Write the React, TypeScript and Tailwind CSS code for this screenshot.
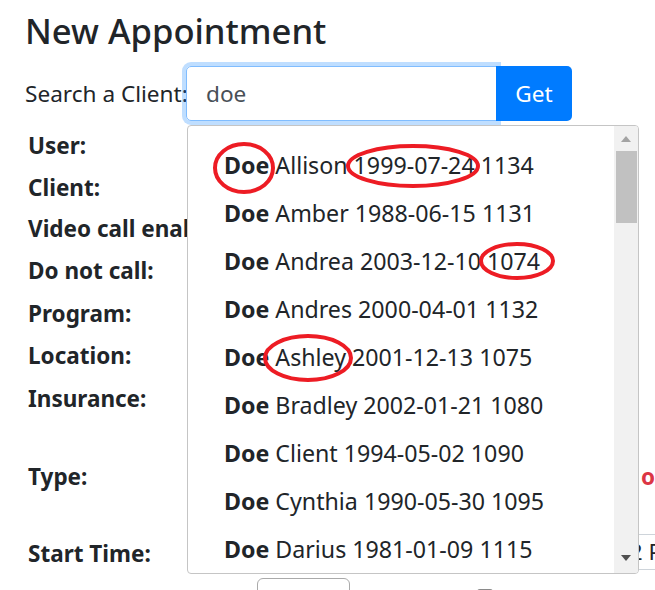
import React from "react";

const items: [string, string, string][] = [
  ["Allison", "1999-07-24", "1134"],
  ["Amber", "1988-06-15", "1131"],
  ["Andrea", "2003-12-10", "1074"],
  ["Andres", "2000-04-01", "1132"],
  ["Ashley", "2001-12-13", "1075"],
  ["Bradley", "2002-01-21", "1080"],
  ["Client", "1994-05-02", "1090"],
  ["Cynthia", "1990-05-30", "1095"],
  ["Darius", "1981-01-09", "1115"],
  ["Elena", "1985-03-11", "1120"],
];

function Row({ h, label, children }: { h: string; label: string; children?: React.ReactNode }) {
  return (
    <div className={`flex items-start ${h}`}>
      <span className="w-[160px] shrink-0 whitespace-nowrap text-[22.5px] font-bold leading-[30px]">{label}</span>
      {children}
    </div>
  );
}

export default function App() {
  return (
    <div className="relative h-[590px] w-[655px] overflow-hidden bg-white font-['Noto_Sans',sans-serif] text-[#212529]">
      <div className="pl-[25px]">
        <h2 className="h-[62px] text-[34.6px] font-medium leading-[62px]">New Appointment</h2>
        <div className="mt-[4px] flex h-[55px] items-center">
          <span className="w-[161px] shrink-0 whitespace-nowrap text-[22.6px]">Search a Client:</span>
          <div className="flex h-full">
            <div className="flex w-[311px] items-center rounded-l-[5px] border border-[#80bdff] pl-[19px] text-[22.6px] text-[#495057] shadow-[0_0_0_4px_rgba(0,123,255,0.25)]">
              doe
            </div>
            <button className="relative z-10 -ml-px w-[76px] rounded-r-[5px] bg-[#007bff] text-[22.6px] text-white">Get</button>
          </div>
        </div>
      </div>

      <div className="mt-[10px] pl-[28px]">
        <Row h="h-[42px]" label="User:" />
        <Row h="h-[41px]" label="Client:" />
        <Row h="h-[42px]" label="Video call enabled:" />
        <Row h="h-[43px]" label="Do not call:" />
        <Row h="h-[42px]" label="Program:" />
        <Row h="h-[43px]" label="Location:" />
        <Row h="h-[78px]" label="Insurance:" />
        <Row h="h-[77px]" label="Type:">
          <span className="ml-[453px] whitespace-nowrap text-[22.5px] font-bold leading-[30px] text-[#dc3545]">o</span>
        </Row>
        <Row h="h-[39px]" label="Start Time:">
          <div className="-mt-[5px] ml-[424px] flex h-[36px] w-[120px] shrink-0 items-center whitespace-nowrap rounded-[5px] border border-[#ced4da] pl-[4px] text-[22.5px]">
            12 PM
          </div>
        </Row>
        <div className="flex items-start">
          <div className="ml-[229px] h-[40px] w-[93px] rounded-[6px] border border-[#aaaaaa]" />
          <div className="ml-[127px] mt-[11px] h-[16px] w-[16px] rounded-[3px] border-2 border-[#8a8a8a]" />
        </div>
      </div>

      {/* autocomplete menu */}
      <div className="absolute left-[187px] top-[125px] flex h-[449px] w-[452px] overflow-hidden rounded-[4px] border border-[#c5c5c5] bg-white">
        <div className="flex-1 pt-[15px]">
          {items.map(([n, d, id]) => (
            <div key={id} className="flex h-[48px] items-center whitespace-nowrap pl-[36px] text-[23.2px] text-[#212529]">
              <span className="font-bold">Doe</span>
              <span>&nbsp;{n} {d} {id}</span>
            </div>
          ))}
        </div>
        <div className="flex w-[24px] flex-col bg-[#f1f1f1]">
          <div className="flex h-[25px] items-center justify-center">
            <svg width="10" height="6" viewBox="0 0 10 6"><polygon points="5,0 10,6 0,6" fill="#a3a3a3" /></svg>
          </div>
          <div className="ml-[2px] h-[72px] w-[21px] bg-[#c1c1c1]" />
          <div className="flex-1" />
          <div className="flex h-[30px] items-center justify-center">
            <svg width="10" height="6" viewBox="0 0 10 6"><polygon points="0,0 10,0 5,6" fill="#505050" /></svg>
          </div>
        </div>
      </div>

      {/* red annotation circles */}
      <svg className="pointer-events-none absolute left-0 top-0" width="655" height="590" viewBox="0 0 655 590">
        <g fill="none" stroke="#ed1c24" strokeWidth="4">
          <ellipse cx="244" cy="168" rx="29" ry="24" />
          <ellipse cx="413" cy="166" rx="65" ry="20" />
          <ellipse cx="517" cy="261" rx="36" ry="17" />
          <ellipse cx="308" cy="358" rx="43" ry="22" />
        </g>
      </svg>
    </div>
  );
}
